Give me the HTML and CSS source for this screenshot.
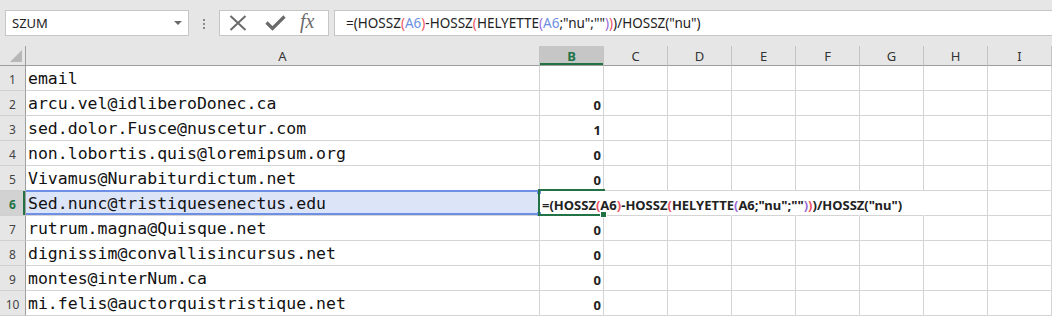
FILE: index.html
```html
<!DOCTYPE html>
<html lang="hu">
<head>
    <meta charset="UTF-8">
    <title>Munkafüzet - SZUM</title>
    <link rel="stylesheet" href="styles.css">
</head>
<body>
    <div class="toolbar">
        <div class="namebox">
            <span>SZUM</span>
            <span class="caret"></span>
        </div>
        <div class="grip"><i></i><i></i><i></i></div>
        <div class="fnbox">
            <svg class="ico-x" width="18" height="16" viewBox="0 0 18 16">
                <path d="M1.5 1 L16.5 15 M16.5 1 L1.5 15" stroke="#6b6b6b" stroke-width="2" fill="none"/>
            </svg>
            <svg class="ico-ok" width="21" height="16" viewBox="0 0 21 16">
                <path d="M1.5 7.5 L7.5 13.5 L19.5 1.5" stroke="#6b6b6b" stroke-width="3.2" fill="none"/>
            </svg>
            <span class="fx">fx</span>
        </div>
        <div class="formula">=(HOSSZ<span class="p2">(</span><span class="ref">A6</span><span class="p2">)</span>-HOSSZ<span class="p2">(</span>HELYETTE<span class="p3">(</span><span class="ref">A6</span>;"nu";""<span class="p3">)</span><span class="p2">)</span>)/HOSSZ("nu")</div>
    </div>

    <div class="sheet">
        <!-- column headers -->
        <div class="corner"><span class="tri"></span></div>
        <div class="ch">A</div>
        <div class="ch cur">B</div>
        <div class="ch">C</div>
        <div class="ch">D</div>
        <div class="ch">E</div>
        <div class="ch">F</div>
        <div class="ch">G</div>
        <div class="ch">H</div>
        <div class="ch">I</div>

        <div class="rh">1</div>
        <div class="c a">email</div>
        <div class="c b"></div>
        <div class="c"></div><div class="c"></div><div class="c"></div><div class="c"></div><div class="c"></div><div class="c"></div><div class="c"></div>

        <div class="rh">2</div>
        <div class="c a">arcu.vel@idliberoDonec.ca</div>
        <div class="c b">0</div>
        <div class="c"></div><div class="c"></div><div class="c"></div><div class="c"></div><div class="c"></div><div class="c"></div><div class="c"></div>

        <div class="rh">3</div>
        <div class="c a">sed.dolor.Fusce@nuscetur.com</div>
        <div class="c b">1</div>
        <div class="c"></div><div class="c"></div><div class="c"></div><div class="c"></div><div class="c"></div><div class="c"></div><div class="c"></div>

        <div class="rh">4</div>
        <div class="c a">non.lobortis.quis@loremipsum.org</div>
        <div class="c b">0</div>
        <div class="c"></div><div class="c"></div><div class="c"></div><div class="c"></div><div class="c"></div><div class="c"></div><div class="c"></div>

        <div class="rh">5</div>
        <div class="c a">Vivamus@Nurabiturdictum.net</div>
        <div class="c b">0</div>
        <div class="c"></div><div class="c"></div><div class="c"></div><div class="c"></div><div class="c"></div><div class="c"></div><div class="c"></div>

        <!-- row 6: A6 is referenced, B6 is being edited -->
        <div class="rh cur">6</div>
        <div class="c a refcell">Sed.nunc@tristiquesenectus.edu<span class="refbox"><i class="h1"></i><i class="h2"></i></span></div>
        <div class="c edit">
            <span class="selbox"><i class="fill"></i></span>
            <span class="edtext">=(HOSSZ<span class="p2">(</span>A6<span class="p2">)</span>-HOSSZ<span class="p2">(</span>HELYETTE<span class="p3">(</span>A6;"nu";""<span class="p3">)</span><span class="p2">)</span>)/HOSSZ("nu")</span>
        </div>
        <div class="c ov"></div><div class="c ov"></div><div class="c ov"></div><div class="c ov"></div><div class="c ov"></div><div class="c"></div><div class="c"></div>

        <div class="rh">7</div>
        <div class="c a">rutrum.magna@Quisque.net</div>
        <div class="c b">0</div>
        <div class="c"></div><div class="c"></div><div class="c"></div><div class="c"></div><div class="c"></div><div class="c"></div><div class="c"></div>

        <div class="rh">8</div>
        <div class="c a">dignissim@convallisincursus.net</div>
        <div class="c b">0</div>
        <div class="c"></div><div class="c"></div><div class="c"></div><div class="c"></div><div class="c"></div><div class="c"></div><div class="c"></div>

        <div class="rh">9</div>
        <div class="c a">montes@interNum.ca</div>
        <div class="c b">0</div>
        <div class="c"></div><div class="c"></div><div class="c"></div><div class="c"></div><div class="c"></div><div class="c"></div><div class="c"></div>

        <div class="rh">10</div>
        <div class="c a">mi.felis@auctorquistristique.net</div>
        <div class="c b">0</div>
        <div class="c"></div><div class="c"></div><div class="c"></div><div class="c"></div><div class="c"></div><div class="c"></div><div class="c"></div>
    </div>
</body>
</html>
```

FILE: styles.css
```css
body {
    margin: 0;
    background: #e6e6e6;
    font-family: "Noto Sans", "Liberation Sans", sans-serif;
    color: #222;
    overflow: hidden;
}

/* ---- formula toolbar ---- */

.toolbar {
    display: flex;
    align-items: flex-start;
    height: 46px;
    padding: 10px 0 0 5px;
    box-sizing: border-box;
}

.namebox {
    width: 184px;
    height: 26px;
    box-sizing: border-box;
    border: 1px solid #c6c6c6;
    background: #fff;
    display: flex;
    align-items: center;
    justify-content: space-between;
    padding: 0 6px 0 6px;
    font-size: 13px;
}

.caret {
    width: 0;
    height: 0;
    border-left: 4px solid transparent;
    border-right: 4px solid transparent;
    border-top: 4px solid #6b6b6b;
}

.grip {
    display: flex;
    flex-direction: column;
    gap: 2px;
    margin: 9px 14px 0 14px;
}

.grip i {
    display: block;
    width: 2px;
    height: 2px;
    background: #8a8a8a;
}

.fnbox {
    width: 110px;
    height: 26px;
    box-sizing: border-box;
    border: 1px solid #c6c6c6;
    background: #fff;
    display: flex;
    align-items: center;
    padding-left: 9px;
}

.ico-ok {
    margin-left: 18px;
}

.fx {
    margin-left: 14px;
    font-family: "Liberation Serif", serif;
    font-style: italic;
    font-size: 20px;
    color: #6b6b6b;
    margin-top: -3px;
}

.formula {
    flex: 1;
    margin-left: 5px;
    height: 26px;
    box-sizing: border-box;
    border: 1px solid #c6c6c6;
    border-right: none;
    background: #fff;
    padding-left: 11px;
    font-size: 13.5px;
    line-height: 25px;
    white-space: nowrap;
}

.ref { color: #6d8fe0; }
.p2 { color: #ee5567; }
.p3 { color: #9b6bd6; }

/* ---- sheet grid ---- */

.sheet {
    display: grid;
    grid-template-columns: 26px 514px repeat(8, 64px);
    grid-template-rows: 20px repeat(10, 25px);
    background: #fff;
}

.sheet > div {
    box-sizing: border-box;
    border-right: 1px solid #d4d4d4;
    border-bottom: 1px solid #d4d4d4;
    position: relative;
}

.corner {
    background: #e6e6e6;
    border-right-color: #9e9e9e !important;
    border-bottom-color: #9e9e9e !important;
}

.tri {
    position: absolute;
    left: 10px;
    top: 4px;
    width: 0;
    height: 0;
    border-left: 12px solid transparent;
    border-bottom: 12px solid #b7b7b7;
}

.ch {
    background: #e6e6e6;
    border-right-color: #c4c4c4 !important;
    border-bottom-color: #9e9e9e !important;
    display: flex;
    align-items: center;
    justify-content: center;
    font-size: 13px;
    color: #333;
}

.ch.cur {
    background: #c6c6c6;
    color: #217346;
    font-weight: bold;
    box-shadow: inset 0 -2px 0 #217346;
}

.rh {
    background: #e6e6e6;
    border-right-color: #9e9e9e !important;
    border-bottom-color: #d0d0d0 !important;
    display: flex;
    align-items: center;
    justify-content: center;
    font-size: 12px;
    color: #444;
    padding-top: 3px;
}

.rh.cur {
    background: #d2d2d2;
    color: #217346;
    font-weight: bold;
    box-shadow: inset -2px 0 0 #217346;
}

.c {
    display: flex;
    align-items: flex-end;
    white-space: nowrap;
}

.a {
    font-family: "DejaVu Sans Mono", "Liberation Mono", monospace;
    font-size: 16.5px;
    line-height: 19px;
    padding: 0 0 2px 2px;
    color: #111;
}

.b {
    justify-content: flex-end;
    font-weight: bold;
    font-size: 13px;
    line-height: 16px;
    padding: 0 2px 2px 0;
    color: #222;
}

/* A6: range referenced by the formula */
.refcell {
    background: #dce4f7;
}

.refbox {
    position: absolute;
    top: -1px;
    left: 0;
    right: -1px;
    bottom: 0;
    border: 2px solid #6d8fe6;
    border-left: none;
}

.refbox i {
    position: absolute;
    right: -3px;
    width: 4px;
    height: 4px;
    background: #6d8fe6;
}

.refbox .h1 { top: -2px; }
.refbox .h2 { bottom: -3px; }

/* B6: cell in edit mode, text runs over C6..G6 */
.edit {
    border-right-color: transparent !important;
    font-weight: bold;
    font-size: 13px;
    line-height: 16px;
    padding: 0 0 2px 2px;
    z-index: 2;
}

.selbox {
    position: absolute;
    top: -2px;
    left: -2px;
    right: -2px;
    bottom: -1px;
    border: 2px solid #217346;
    border-right: none;
}

.fill {
    position: absolute;
    right: -2px;
    bottom: -4px;
    width: 5px;
    height: 5px;
    background: #217346;
    border: 1px solid #fff;
}

.ov {
    border-right-color: #fff !important;
}
```
